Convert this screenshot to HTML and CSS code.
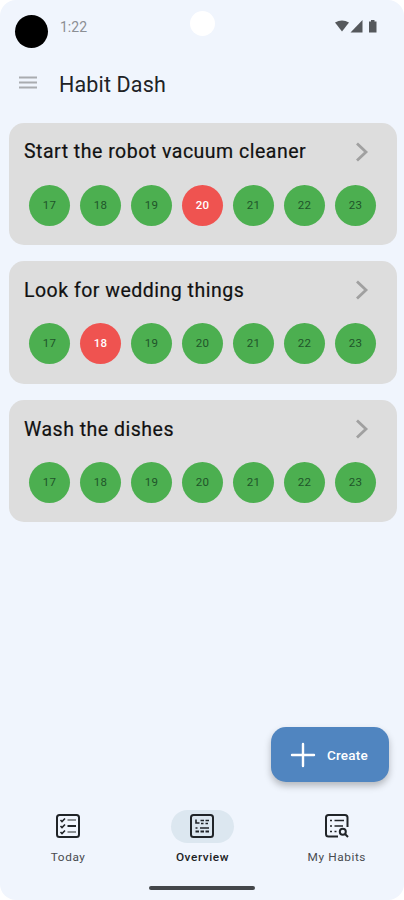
FILE: index.html
```html
<!DOCTYPE html>
<html lang="en">
<head>
  <meta charset="UTF-8">
  <meta name="viewport" content="width=device-width, initial-scale=1.0">
  <title>Habit Dash</title>
  <link rel="stylesheet" href="styles.css">
</head>
<body>
  <div class="screen">
    <div class="status-bar">
      <span class="lens"></span>
      <span class="time">1:22</span>
      <span class="camera"></span>
      <svg class="status-icons" width="44" height="14" viewBox="0 0 44 14">
        <path d="M0 2.500Q7 -1.500 14 2.500L7 11.500Z"/>
        <path d="M15.500 12.500L27.500 0V12.500Z"/>
        <path d="M34 1.500h2V0h3.500V1.500h2v11H34Z"/>
      </svg>
    </div>

    <header class="app-bar">
      <svg class="menu" width="18" height="13" viewBox="0 0 18 13">
        <path d="M0 1.500h18M0 6.500h18M0 11.500h18"/>
      </svg>
      <h1>Habit Dash</h1>
    </header>

    <main class="habits">
      <section class="card">
        <div class="card-head">
          <h2>Start the robot vacuum cleaner</h2>
          <svg class="chevron" width="14" height="20" viewBox="0 0 14 20"><path d="M2 1.500L11 10L2 18.500"/></svg>
        </div>
        <div class="days">
          <span class="day">17</span>
          <span class="day">18</span>
          <span class="day">19</span>
          <span class="day missed">20</span>
          <span class="day">21</span>
          <span class="day">22</span>
          <span class="day">23</span>
        </div>
      </section>

      <section class="card">
        <div class="card-head">
          <h2>Look for wedding things</h2>
          <svg class="chevron" width="14" height="20" viewBox="0 0 14 20"><path d="M2 1.500L11 10L2 18.500"/></svg>
        </div>
        <div class="days">
          <span class="day">17</span>
          <span class="day missed">18</span>
          <span class="day">19</span>
          <span class="day">20</span>
          <span class="day">21</span>
          <span class="day">22</span>
          <span class="day">23</span>
        </div>
      </section>

      <section class="card">
        <div class="card-head">
          <h2>Wash the dishes</h2>
          <svg class="chevron" width="14" height="20" viewBox="0 0 14 20"><path d="M2 1.500L11 10L2 18.500"/></svg>
        </div>
        <div class="days">
          <span class="day">17</span>
          <span class="day">18</span>
          <span class="day">19</span>
          <span class="day">20</span>
          <span class="day">21</span>
          <span class="day">22</span>
          <span class="day">23</span>
        </div>
      </section>
    </main>

    <button class="create">
      <svg width="26" height="26" viewBox="0 0 26 26"><path d="M13 2v22M2 13h22"/></svg>
      <span>Create</span>
    </button>

    <nav class="tabs">
      <a class="tab">
        <span class="tab-icon">
          <svg width="24" height="24" viewBox="0 0 24 24">
            <rect x="1" y="1" width="22" height="22" rx="2.500"/>
            <path class="thin" d="M4.500 6l1.500 1.500L9 4.500M4.500 12l1.500 1.500L9 10.500M4.500 18l1.500 1.500L9 16.500"/>
            <path class="soft" d="M11.500 6H20M11.500 18H20"/>
            <path d="M11.500 12H20"/>
          </svg>
        </span>
        <span class="label">Today</span>
      </a>
      <a class="tab active">
        <span class="tab-icon">
          <svg width="24" height="24" viewBox="0 0 24 24">
            <rect x="1" y="1" width="22" height="22" rx="2.500"/>
            <path class="thin" d="M6 5.500v3.500h3.500M10.500 6.500h3.500M15.500 6.500h3.500M11 9.500h2.500M15.500 9.500h2.500"/>
            <path class="thin" d="M5.500 14h2M10 14h9"/>
            <path d="M5.500 17.500h3.500M10.500 17.500h3.500M15.500 17.500h3.500"/>
          </svg>
        </span>
        <span class="label">Overview</span>
      </a>
      <a class="tab">
        <span class="tab-icon">
          <svg width="24" height="24" viewBox="0 0 24 24">
            <path d="M13 22.500H3.500Q1 22.500 1 20V3.500Q1 1 3.500 1H20Q22.500 1 22.500 3.500V13"/>
            <path class="thin" d="M5 6.500h2M9.500 6.500H19M5 12h2M9.500 12H18M5 17.500h2M9.500 17.500h2"/>
            <circle cx="17.800" cy="17.800" r="3"/>
            <path d="M20 20l3 3"/>
          </svg>
        </span>
        <span class="label">My Habits</span>
      </a>
    </nav>
    <div class="home-bar"></div>
  </div>
</body>
</html>
```
FILE: styles.css
```css
* {
  box-sizing: border-box;
}
body {
  margin: 0;
  background: #ffffff;
  font-family: Roboto, "Liberation Sans", sans-serif;
}
.screen {
  display: flex;
  flex-direction: column;
  width: 404px;
  height: 900px;
  background: #f0f5fd;
  border-radius: 16px;
}
svg {
  flex: none;
  fill: none;
}
.status-bar {
  display: flex;
  align-items: center;
  height: 50px;
  padding: 3px 25px 0 15px;
}
.lens {
  width: 33px;
  height: 33px;
  margin-top: 10px;
  border-radius: 50%;
  background: #000000;
}
.time {
  width: 142px;
  padding-left: 12px;
  font-size: 14px;
  line-height: 16px;
  color: #8c8f94;
}
.camera {
  width: 25px;
  height: 25px;
  margin-top: -6px;
  border-radius: 50%;
  background: #ffffff;
}
.status-icons {
  margin-left: auto;
  fill: #55585c;
}
.app-bar {
  display: flex;
  align-items: center;
  height: 68px;
  padding-left: 19px;
}
.menu {
  margin-top: -3px;
  stroke: #a9acb0;
  stroke-width: 2;
}
h1 {
  margin: 1px 0 0 22px;
  font-size: 21.5px;
  font-weight: 400;
  line-height: 28px;
  letter-spacing: 0.15px;
  color: #202225;
}
.habits {
  display: flex;
  flex-direction: column;
  gap: 16.3px;
  padding: 4.6px 7px 0 9px;
}
.card {
  height: 122.4px;
  padding: 16.2px 21px 0 15px;
  border-radius: 15px;
  background: #dddddd;
}
.card-head {
  display: flex;
  align-items: center;
  justify-content: space-between;
  height: 26px;
  padding-right: 7px;
}
h2 {
  margin: 1.4px 0 0;
  font-size: 19.5px;
  font-weight: 400;
  line-height: 26px;
  letter-spacing: 0.5px;
  white-space: nowrap;
  color: #111111;
  -webkit-text-stroke: 0.2px #111111;
}
.chevron {
  stroke: #a0a0a0;
  stroke-width: 2.8;
}
.days {
  display: flex;
  justify-content: space-between;
  margin-top: 20px;
  padding-left: 5px;
}
.day {
  width: 41px;
  height: 41px;
  border-radius: 50%;
  background: #4caf50;
  font-size: 11.5px;
  line-height: 41px;
  text-align: center;
  letter-spacing: 0.3px;
  color: #20552a;
}
.day.missed {
  background: #ef5350;
  font-weight: 500;
  color: #ffffff;
}
.create {
  display: flex;
  align-items: center;
  align-self: flex-end;
  gap: 11px;
  width: 118px;
  height: 55px;
  margin: auto 15px 17px 0;
  padding: 0 0 0 19px;
  border: none;
  border-radius: 15px;
  background: #5085c0;
  box-shadow: 0 4px 7px rgba(0, 0, 0, 0.25);
  font-family: inherit;
  font-size: 13.5px;
  font-weight: 500;
  letter-spacing: 0.2px;
  color: #ffffff;
}
.create svg {
  stroke: #ffffff;
  stroke-width: 2.4;
  stroke-linecap: round;
}
.tabs {
  display: flex;
  height: 87px;
  padding: 10.5px 0 0 1px;
}
.tab {
  display: flex;
  flex: 1;
  flex-direction: column;
  align-items: center;
}
.tab-icon {
  display: flex;
  align-items: center;
  justify-content: center;
  width: 63px;
  height: 33px;
  border-radius: 17px;
}
.active .tab-icon {
  background: #dce7f0;
}
.tab svg {
  stroke: #202428;
  stroke-width: 2;
}
.tab .thin {
  stroke-width: 1.6;
}
.tab .soft {
  stroke: #8b9094;
}
.label {
  margin-top: 6.5px;
  font-size: 11.8px;
  line-height: 16px;
  letter-spacing: 0.6px;
  color: #484b50;
}
.active .label {
  font-weight: 500;
  color: #202225;
}
.home-bar {
  width: 106px;
  height: 4px;
  margin: 0 auto 10px;
  border-radius: 2px;
  background: #43464a;
}
```
